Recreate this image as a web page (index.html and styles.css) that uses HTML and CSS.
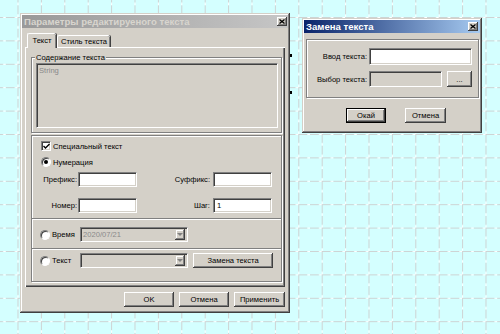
FILE: index.html
```html
<!DOCTYPE html>
<html lang="ru">
<head>
    <meta charset="UTF-8">
    <title>Параметры редактируеного текста</title>
    <link rel="stylesheet" href="styles.css">
</head>
<body>
    <!-- фон рабочей области: пунктирная сетка -->
    <svg class="grid" width="500" height="334">
        <defs>
            <pattern id="cell" x="17.5" y="17" width="23.4" height="23.4" patternUnits="userSpaceOnUse">
                <path d="M0 0.5H23.4M0.5 0V23.4" stroke="#ffffff" stroke-width="1"/>
                <path d="M0 0.5H23.4M0.5 0V23.4" stroke="#cdd3d3" stroke-width="1" stroke-dasharray="9 2.7"/>
            </pattern>
        </defs>
        <rect width="500" height="334" fill="url(#cell)"/>
    </svg>

    <!-- основное окно -->
    <div class="window main">
        <div class="caption inactive">
            <span>Параметры редактируеного текста</span>
            <span class="close">
                <svg width="6" height="5" viewBox="0 0 6 5"><path d="M0.5 0.5L5.5 4.5M5.5 0.5L0.5 4.5" stroke="#000" stroke-width="1.3"/></svg>
            </span>
        </div>
        <div class="content">
            <div class="tabs">
                <div class="tab active">Текст</div>
                <div class="tab">Стиль текста</div>
            </div>
            <div class="tab-panel">
                <fieldset class="group">
                    <legend>Содержание текста</legend>
                    <div class="memo">String</div>
                </fieldset>

                <div class="options">
                    <div class="section numbering">
                        <div class="check-row">
                            <span class="checkbox">
                                <svg width="7" height="7" viewBox="0 0 7 7"><path d="M0.5 3L2.5 5L6.5 1" fill="none" stroke="#000" stroke-width="1.4"/></svg>
                            </span>
                            <span>Специальный текст</span>
                        </div>
                        <div class="check-row radio-row">
                            <span class="radio on"></span>
                            <span>Нумерация</span>
                        </div>
                        <div class="fields">
                            <span class="lbl">Префикс:</span><span class="edit"></span>
                            <span class="lbl">Суффикс:</span><span class="edit"></span>
                            <span class="lbl">Номер:</span><span class="edit"></span>
                            <span class="lbl">Шаг:</span><span class="edit">1</span>
                        </div>
                    </div>
                    <div class="section time">
                        <div class="choice"><span class="radio"></span><span>Время</span></div>
                        <div class="combo disabled"><span class="value">2020/07/21</span><span class="arrow"></span></div>
                    </div>
                    <div class="section text">
                        <div class="choice"><span class="radio"></span><span>Текст</span></div>
                        <div class="combo disabled"><span class="value"></span><span class="arrow"></span></div>
                        <div class="btn replace-btn">Замена текста</div>
                    </div>
                </div>
            </div>
            <div class="buttons">
                <div class="btn w50">OK</div>
                <div class="btn w50">Отмена</div>
                <div class="btn w51">Применить</div>
            </div>
        </div>
    </div>

    <span class="grip g1"></span>
    <span class="grip g2"></span>

    <!-- окно замены текста -->
    <div class="window replace">
        <div class="caption active">
            <span>Замена текста</span>
            <span class="close">
                <svg width="6" height="5" viewBox="0 0 6 5"><path d="M0.5 0.5L5.5 4.5M5.5 0.5L0.5 4.5" stroke="#000" stroke-width="1.3"/></svg>
            </span>
        </div>
        <div class="content-small">
            <div class="group plain">
                <div class="form">
                    <span class="lbl">Ввод текста:</span>
                    <span class="edit wide"></span>
                    <span class="lbl">Выбор текста:</span>
                    <span class="edit off"></span>
                    <div class="btn dots">...</div>
                </div>
            </div>
            <div class="buttons-small">
                <div class="btn default w40">Окай</div>
                <div class="btn w41">Отмена</div>
            </div>
        </div>
    </div>
</body>
</html>
```

FILE: styles.css
```css
* {
    box-sizing: border-box;
}
body {
    margin: 0;
    width: 500px;
    height: 334px;
    overflow: hidden;
    position: relative;
    background: #d4ffff;
    font-family: "Liberation Sans", Arial, sans-serif;
    font-size: 7.6px;
    color: #000000;
}
.grid {
    position: absolute;
    left: 0;
    top: 0;
}

/* окна */
.window {
    position: absolute;
    background: #d4d0c8;
    padding: 2px;
    box-shadow: inset -1px -1px #404040, inset 1px 1px #d4d0c8, inset -2px -2px #808080, inset 2px 2px #ffffff;
}
.main {
    left: 20px;
    top: 13px;
    width: 270px;
    height: 300px;
}
.replace {
    left: 302px;
    top: 18px;
    width: 180px;
    height: 115px;
}
.caption {
    height: 13px;
    display: flex;
    align-items: center;
    justify-content: space-between;
    padding: 0 1px 0 2px;
    font-weight: bold;
    font-size: 9.6px;
    color: #ffffff;
}
.caption.inactive {
    background: linear-gradient(to right, #999999, #c6c6c6);
    color: #d8d5ce;
}
.caption.active {
    background: linear-gradient(to right, #0a246a, #a6caf0);
    padding-right: 2px;
}
.close {
    width: 10px;
    height: 9px;
    background: #d4d0c8;
    display: flex;
    align-items: center;
    justify-content: center;
    box-shadow: inset -1px -1px #404040, inset 1px 1px #ffffff, inset -2px -2px #808080;
}
.close svg {
    display: block;
}

/* содержимое основного окна */
.content {
    padding: 5px 3px 0 3px;
}
.tabs {
    display: flex;
    align-items: flex-start;
    height: 15px;
    padding-left: 2px;
    position: relative;
    z-index: 1;
    margin-bottom: -1px;
}
.tab {
    height: 12px;
    margin-top: 2px;
    margin-left: 1px;
    width: 53px;
    line-height: 12px;
    text-align: center;
    background: #d4d0c8;
    border-top: 1px solid #ffffff;
    border-left: 1px solid #ffffff;
    border-radius: 2px 2px 0 0;
    box-shadow: inset -1px 0 #808080, 1px 0 0 #404040;
}
.tab.active {
    height: 15px;
    margin-top: 0;
    margin-left: 0;
    width: 29px;
    line-height: 13px;
}
.tab-panel {
    width: 260px;
    height: 240px;
    padding: 4px 3px 3px 5px;
    border-top: 1px solid #ffffff;
    border-left: 1px solid #ffffff;
    box-shadow: inset -1px -1px #404040, inset -2px -2px #808080;
}

.group {
    margin: 0;
    padding: 0 3px 4px 4px;
    border: 1px solid #808080;
    box-shadow: 1px 1px 0 #ffffff, inset 1px 1px 0 #ffffff;
}
.group legend {
    padding: 0 1px;
    margin-left: -1px;
    line-height: 11px;
    background: #d4d0c8;
}
.memo {
    height: 65px;
    padding: 2px 2px;
    color: #8a8a8a;
    border: 1px solid;
    border-color: #808080 #ffffff #ffffff #808080;
    box-shadow: inset 1px 1px #404040, inset -1px -1px #d4d0c8;
}

.options {
    margin-top: 2px;
    height: 147px;
    border: 1px solid #808080;
    box-shadow: 1px 1px 0 #ffffff, inset 1px 1px 0 #ffffff;
}
.section {
    display: flex;
    align-items: center;
}
.section + .section {
    border-top: 1px solid #808080;
    box-shadow: inset 0 1px #ffffff;
}
.numbering {
    height: 82px;
    flex-direction: column;
    align-items: stretch;
    padding-top: 5px;
}
.check-row {
    display: flex;
    align-items: center;
    gap: 2px;
    height: 10px;
    margin-left: 9px;
}
.radio-row {
    margin-top: 6px;
}
.checkbox {
    width: 10px;
    height: 10px;
    background: #ffffff;
    display: flex;
    align-items: center;
    justify-content: center;
    border: 1px solid;
    border-color: #808080 #ffffff #ffffff #808080;
    box-shadow: inset 1px 1px #404040, inset -1px -1px #d4d0c8;
}
.checkbox svg {
    display: block;
}
.radio {
    width: 10px;
    height: 10px;
    border-radius: 50%;
    background: #ffffff;
    border: 1px solid;
    border-color: #808080 #ffffff #ffffff #808080;
    box-shadow: inset 1px 1px #404040;
    display: flex;
    align-items: center;
    justify-content: center;
    flex: none;
}
.radio.on:after {
    content: "";
    width: 4px;
    height: 4px;
    border-radius: 50%;
    background: #000000;
}

.fields {
    margin-top: 5px;
    display: grid;
    grid-template-columns: 46px 59px 76px 59px;
    grid-auto-rows: 15px;
    row-gap: 11px;
    align-items: center;
}
.lbl {
    text-align: right;
    padding-right: 1px;
}
.fields .lbl:nth-child(3),
.fields .lbl:nth-child(7) {
    padding-right: 3px;
}
.edit {
    height: 15px;
    background: #ffffff;
    padding: 1px 3px;
    line-height: 11px;
    border: 1px solid;
    border-color: #808080 #ffffff #ffffff #808080;
    box-shadow: inset 1px 1px #404040, inset -1px -1px #d4d0c8;
}

.time {
    height: 30px;
    padding: 8px 0 0 8px;
    align-items: flex-start;
}
.text {
    height: 33px;
    padding: 4px 0 0 8px;
    align-items: flex-start;
}
.choice {
    width: 40px;
    height: 15px;
    display: flex;
    align-items: center;
    gap: 2px;
}
.combo {
    width: 108px;
    height: 15px;
    display: flex;
    align-items: center;
    justify-content: space-between;
    padding: 0 2px 0 2px;
    border: 1px solid;
    border-color: #808080 #ffffff #ffffff #808080;
    box-shadow: inset 1px 1px #404040, inset -1px -1px #d4d0c8;
}
.combo.disabled {
    background: #d4d0c8;
    color: #8a8a8a;
}
.combo .arrow {
    width: 10px;
    height: 11px;
    display: flex;
    align-items: center;
    justify-content: center;
    box-shadow: inset -1px -1px #404040, inset 1px 1px #d4d0c8, inset -2px -2px #808080, inset 2px 2px #ffffff;
}
.combo .arrow:after {
    content: "";
    border-left: 3px solid transparent;
    border-right: 3px solid transparent;
    border-top: 3px solid #808080;
}

.btn {
    height: 15px;
    display: flex;
    align-items: center;
    justify-content: center;
    background: #d4d0c8;
    box-shadow: inset -1px -1px #404040, inset 1px 1px #ffffff, inset -2px -2px #808080, inset 2px 2px #d4d0c8;
}
.replace-btn {
    width: 80px;
    margin-left: 5px;
}
.buttons {
    display: flex;
    justify-content: flex-end;
    gap: 5px;
    margin-top: 5px;
}
.w50 { width: 50px; }
.w51 { width: 51px; }
.w40 { width: 40px; }
.w41 { width: 41px; }

.grip {
    position: absolute;
    left: 290px;
    width: 2px;
    height: 3px;
    background: #000000;
}
.g1 { top: 54px; }
.g2 { top: 91px; }

/* окно замены */
.content-small {
    padding: 6px 1px 0 2px;
}
.group.plain {
    padding: 8px 0 10px 0;
}
.form {
    display: grid;
    grid-template-columns: 62px 78px 25px;
    row-gap: 6px;
    align-items: center;
}
.form .lbl {
    padding-right: 2px;
}
.form .edit.wide {
    grid-column: span 2;
    width: 103px;
    height: 17px;
}
.form .edit.off {
    width: 73px;
    height: 16px;
    background: #d4d0c8;
}
.btn.dots {
    height: 16px;
}
.buttons-small {
    display: flex;
    gap: 19px;
    margin-top: 10px;
    padding-left: 40px;
}
.btn.default {
    border: 1px solid #000000;
}
```
